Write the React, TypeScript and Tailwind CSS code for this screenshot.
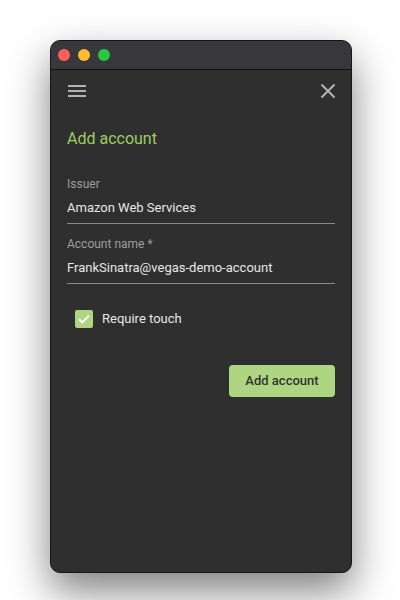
export default function App() {
  return (
    <div
      className="w-[400px] h-[600px] bg-white pt-10 pl-[50px]"
      style={{ fontFamily: "Roboto, 'Liberation Sans', sans-serif" }}
    >
      <div className="w-[302px] h-[533px] rounded-[10px] border border-[#161616] bg-[#2f2f2f] shadow-[0_18px_40px_rgba(0,0,0,0.5)] overflow-hidden flex flex-col">
        {/* title bar */}
        <div className="h-[29px] shrink-0 bg-[#38373c] border-b border-[#111] flex items-center gap-2 pl-[7px]">
          <span className="w-3 h-3 rounded-full bg-[#fe5f57]" />
          <span className="w-3 h-3 rounded-full bg-[#febc2e]" />
          <span className="w-3 h-3 rounded-full bg-[#28c840]" />
        </div>

        <div className="px-4 flex flex-col">
          {/* toolbar */}
          <div className="h-[42px] flex items-center justify-between">
            <svg width="18" height="12" viewBox="0 0 18 12" className="ml-px">
              <rect x="0" y="0" width="18" height="2" fill="#b3b3b3" />
              <rect x="0" y="5" width="18" height="2" fill="#b3b3b3" />
              <rect x="0" y="10" width="18" height="2" fill="#b3b3b3" />
            </svg>
            <svg width="16" height="16" viewBox="0 0 16 16" className="mr-[-1px]">
              <path d="M1.5 1.5 L14.5 14.5 M14.5 1.5 L1.5 14.5" stroke="#b3b3b3" strokeWidth="2" />
            </svg>
          </div>

          <h1 className="mt-[15px] text-[16px] leading-6 text-[#9ccc65]">Add account</h1>

          <div className="mt-[25px] pb-[5px] border-b border-[#8a8a8a]">
            <p className="text-[12px] leading-4 text-[#9e9e9e]">Issuer</p>
            <p className="mt-[6px] text-[13px] leading-5 text-[#e6e6e6]">Amazon Web Services</p>
          </div>

          <div className="mt-[12px] pb-[5px] border-b border-[#8a8a8a]">
            <p className="text-[12px] leading-4 text-[#9e9e9e]">Account name *</p>
            <p className="mt-[6px] text-[13px] leading-5 text-[#e6e6e6]">FrankSinatra@vegas-demo-account</p>
          </div>

          <label className="mt-[26px] ml-2 flex items-center gap-[9px] h-[18px]">
            <span className="w-[18px] h-[18px] rounded-[2px] bg-[#aed581] flex items-center justify-center">
              <svg width="14" height="14" viewBox="0 0 14 14">
                <path d="M2 7.2 L5.3 10.4 L12 3.6" stroke="#fff" strokeWidth="2" fill="none" />
              </svg>
            </span>
            <span className="text-[13px] text-[#e6e6e6]">Require touch</span>
          </label>

          <div className="mt-[37px] flex justify-end">
            <button className="w-[106px] h-8 rounded bg-[#aed581] text-[13px] font-medium text-[#333]">
              Add account
            </button>
          </div>
        </div>
      </div>
    </div>
  );
}
